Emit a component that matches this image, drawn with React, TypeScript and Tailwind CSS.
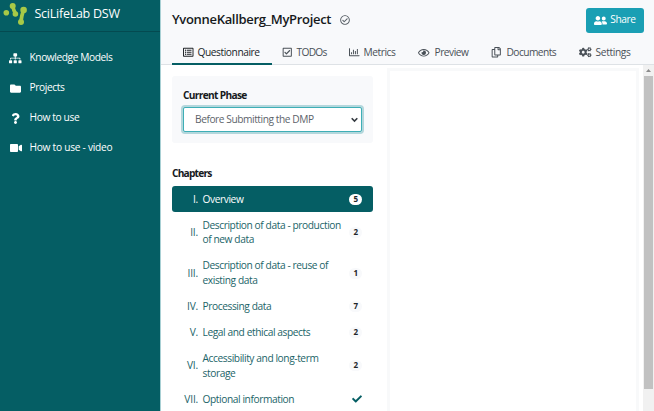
import React from "react";
import {
  FaSitemap, FaFolder, FaQuestion, FaVideo, FaRegCheckCircle, FaRegListAlt, FaRegCheckSquare,
  FaRegChartBar, FaRegEye, FaRegCopy, FaCogs, FaUserFriends, FaCheck,
} from "react-icons/fa";

const nav = [
  { icon: <FaSitemap size={12.5} />, label: "Knowledge Models", cls: "tracking-[-0.42px]" },
  { icon: <FaFolder size={11} />, label: "Projects", cls: "tracking-[-0.4px]" },
  { icon: <FaQuestion size={11} />, label: "How to use", cls: "tracking-[-0.36px]" },
  { icon: <FaVideo size={12} />, label: "How to use - video", cls: "tracking-[-0.27px]" },
];

const tabs = [
  { icon: <FaRegListAlt size={10.5} />, label: "Questionnaire", cls: "w-[100px] pl-[11px] gap-[4px] tracking-[-0.43px] text-[#212529] border-[#055e64]" },
  { icon: <FaRegCheckSquare size={10.5} />, label: "TODOs", cls: "w-[66px] pl-[10px] gap-[4px] tracking-[-0.7px] text-[#495057] border-transparent" },
  { icon: <FaRegChartBar size={10.5} />, label: "Metrics", cls: "w-[70px] pl-[11px] gap-[4px] tracking-[-0.43px] text-[#495057] border-transparent" },
  { icon: <FaRegEye size={11.5} />, label: "Preview", cls: "w-[73px] pl-[10px] gap-[5px] tracking-[-0.48px] text-[#495057] border-transparent" },
  { icon: <FaRegCopy size={10.5} />, label: "Documents", cls: "w-[87px] pl-[10px] gap-[5px] tracking-[-0.55px] text-[#495057] border-transparent" },
  { icon: <FaCogs size={12.5} />, label: "Settings", cls: "w-[74px] pl-[11px] gap-[4px] tracking-[-0.34px] text-[#495057] border-transparent" },
];

const chapters = [
  { n: "I.", lines: ["Overview"], count: "5", active: true },
  { n: "II.", lines: ["Description of data - production", "of new data"], count: "2" },
  { n: "III.", lines: ["Description of data - reuse of", "existing data"], count: "1" },
  { n: "IV.", lines: ["Processing data"], count: "7" },
  { n: "V.", lines: ["Legal and ethical aspects"], count: "2" },
  { n: "VI.", lines: ["Accessibility and long-term", "storage"], count: "2" },
  { n: "VII.", lines: ["Optional information"], count: "" },
];

function Sidebar() {
  return (
    <aside className="w-[160px] shrink-0 bg-[#055e64] text-white">
      <div className="flex h-[32px] items-start border-b border-[#044a50] pl-[3px]">
        <svg width="25" height="27" viewBox="0 0 25 27" fill="#a7c947" stroke="#a7c947">
          <circle cx="3.3" cy="12.7" r="2.8" stroke="none" />
          <path d="M9.8 6.3Q10.5 10 12.4 13.3" fill="none" strokeWidth="3.6" strokeLinecap="round" />
          <circle cx="9.7" cy="6" r="3" stroke="none" />
          <circle cx="12.4" cy="14" r="2.8" stroke="none" />
          <path d="M20.5 10Q18.8 15 18 21" fill="none" strokeWidth="3.8" strokeLinecap="round" />
          <circle cx="20.6" cy="10" r="3.3" stroke="none" />
          <circle cx="18" cy="22" r="3" stroke="none" />
        </svg>
        <span className="ml-[6.5px] mt-[4px] text-[12.5px] leading-[20px] tracking-[-0.25px]">SciLifeLab DSW</span>
      </div>
      <nav className="pt-[11px]">
        {nav.map((i) => (
          <a key={i.label} className="flex h-[30px] items-center pl-[9px] text-[10.2px]">
            <span className="mr-[7.5px] flex w-[13px] justify-center">{i.icon}</span>
            <span className={i.cls}>{i.label}</span>
          </a>
        ))}
      </nav>
    </aside>
  );
}

export default function App() {
  return (
    <div className="flex h-[411px] w-[654px] overflow-hidden whitespace-nowrap bg-white font-['Open_Sans','Noto_Sans',sans-serif]">
      <Sidebar />
      <main className="flex w-[494px] flex-col border-l border-[#a8d0d4]">
        <header className="h-[65px] shrink-0 border-b border-[#dee2e6] bg-[#f8f9fb] pl-[11px]">
          <div className="flex h-[40px] items-center">
            <h1 className="w-[167.5px] text-[13px] font-semibold tracking-[-0.32px] text-[#16191c]">YvonneKallberg_MyProject</h1>
            <FaRegCheckCircle size={10} className="text-[#5d646b]" />
            <button className="ml-auto mr-[10px] flex h-[25px] w-[58px] items-center justify-center gap-[3px] rounded-[3px] bg-[#1a9fb4] text-[10.2px] tracking-[-0.4px] text-white">
              <FaUserFriends size={13} />
              <span>Share</span>
            </button>
          </div>
          <div className="flex h-[25px]">
            {tabs.map((t) => (
              <a key={t.label} className={`flex shrink-0 items-center border-b-2 pt-[2px] text-[10.2px] ${t.cls}`}>
                {t.icon}
                <span>{t.label}</span>
              </a>
            ))}
          </div>
        </header>
        <div className="flex h-[346px]">
          <section className="w-[226px] shrink-0 pl-[11px] pt-[11px]">
            <div className="h-[67px] w-[201px] rounded-[3px] bg-[#f8f9fb] px-[11px] pt-[11px]">
              <div className="text-[10.2px] font-bold leading-[16px] tracking-[-0.68px] text-[#16191c]">Current Phase</div>
              <div className="mt-[4px] flex h-[25px] items-center justify-between rounded-[2px] border border-[#3eaeb6] bg-white pl-[11px] pr-[3px] text-[10.2px] tracking-[-0.44px] text-[#5d646b] ring-2 ring-[#b3d7dc]">
                <span>Before Submitting the DMP</span>
                <svg width="7" height="6" viewBox="0 0 7 6" fill="none" stroke="#343a40" strokeWidth="1.6"><path d="M.7 1.2 3.5 4 6.3 1.2" /></svg>
              </div>
            </div>
            <h2 className="mt-[22px] text-[10.2px] font-bold leading-[16px] tracking-[-0.8px] text-[#16191c]">Chapters</h2>
            <div className="mt-[5px] w-[201px]">
              {chapters.map((c) => (
                <a
                  key={c.n}
                  className={`flex items-center rounded-[3px] text-[10.2px] leading-[14.7px] tracking-[-0.41px] ${c.lines.length > 1 ? "h-[40.7px]" : "h-[26px]"} ${c.active ? "bg-[#055e64] text-white" : "text-[#1b6468]"}`}
                >
                  <span className="w-[26px] shrink-0 text-right tracking-[-0.2px]">{c.n}</span>
                  <span className="ml-[4.5px] flex-1">
                    {c.lines.map((l) => <span key={l} className="block">{l}</span>)}
                  </span>
                  {c.count ? (
                    <span className={`mr-[11px] flex h-[11px] w-[13px] shrink-0 items-center justify-center rounded-full text-[8px] font-bold text-[#212529] ${c.active ? "bg-white" : "bg-[#f8f9fb]"}`}>{c.count}</span>
                  ) : (
                    <FaCheck size={10} className="mr-[11px] text-[#055e64]" />
                  )}
                </a>
              ))}
            </div>
          </section>
          <section className="mt-[3px] w-[252px] shrink-0 border-x-[3px] border-t-[3px] border-[#f8f9fa]" />
          <div className="ml-auto w-[11px] bg-[#f1f1f1]">
            <div className="flex h-[11px] items-center justify-center">
              <svg width="5" height="3" viewBox="0 0 5 3" fill="#8b8b8b"><path d="M0 3 2.5 0 5 3Z" /></svg>
            </div>
            <div className="mx-px h-[313px] bg-[#c1c1c1]" />
          </div>
        </div>
      </main>
    </div>
  );
}
